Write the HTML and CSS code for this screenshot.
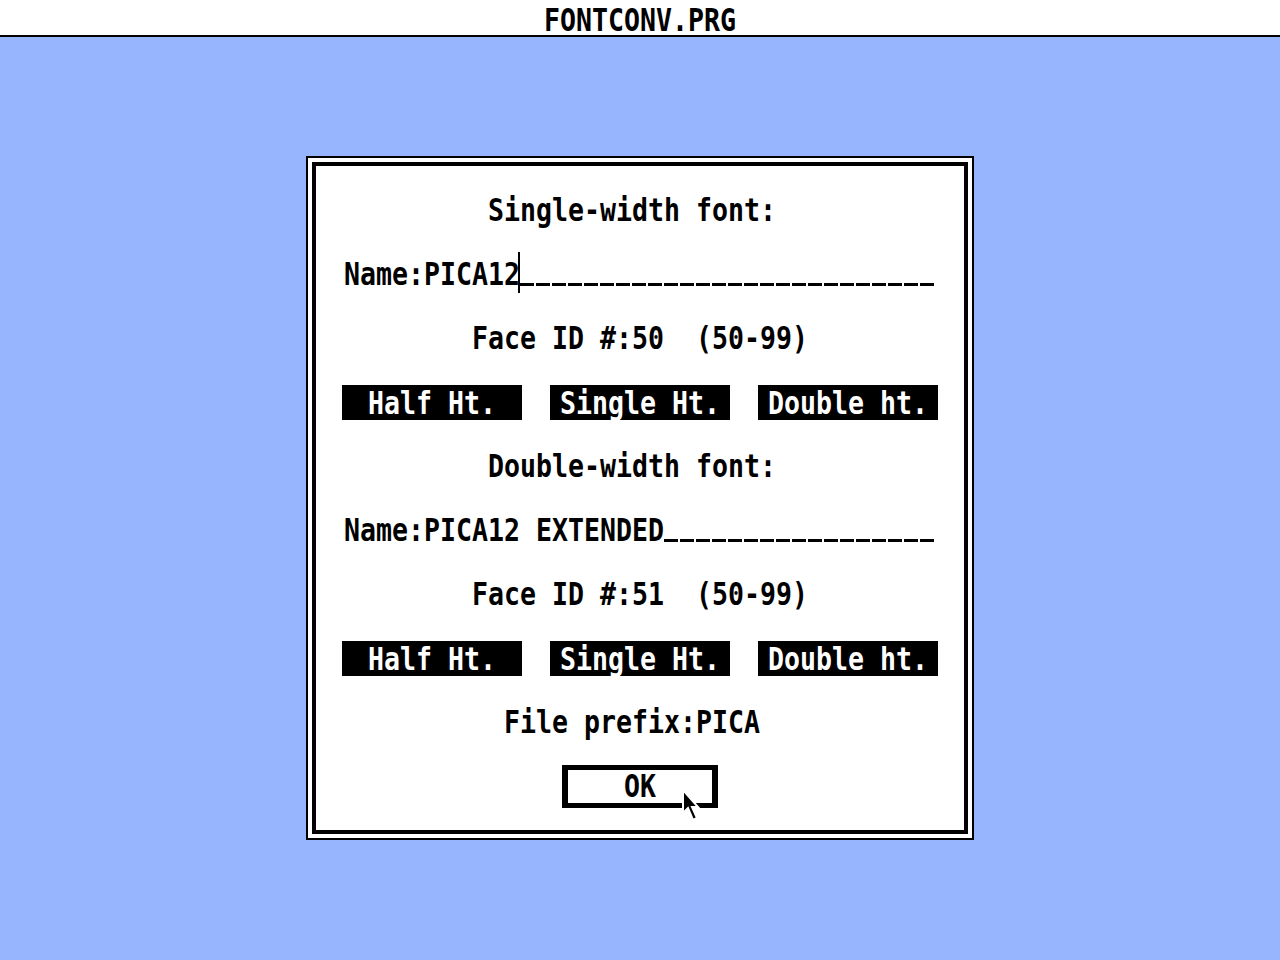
FILE: index.html
```html
<!DOCTYPE html>
<html lang="en">
<head>
    <meta charset="UTF-8">
    <title>FONTCONV.PRG</title>
    <link rel="stylesheet" href="styles.css">
</head>
<body>

    <!-- Title bar -->
    <header class="title-bar">
        <span class="txt">FONTCONV.PRG</span>
    </header>

    <!-- Desktop with the dialog box -->
    <main class="desktop">
        <div class="dialog">
            <div class="dialog-body">

                <div class="row"><span class="txt even">Single-width font:</span></div>

                <div class="row">
                    <span class="txt">Name:PICA12</span><span class="cursor"></span><span class="blank" style="width: 416px"></span>
                </div>

                <div class="row"><span class="txt">Face ID #:50  (50-99)</span></div>

                <div class="row buttons">
                    <div class="btn"><span class="txt">Half Ht.</span></div>
                    <div class="btn"><span class="txt">Single Ht.</span></div>
                    <div class="btn"><span class="txt">Double ht.</span></div>
                </div>

                <div class="row"><span class="txt even">Double-width font:</span></div>

                <div class="row">
                    <span class="txt">Name:PICA12 EXTENDED</span><span class="blank" style="width: 272px"></span>
                </div>

                <div class="row"><span class="txt">Face ID #:51  (50-99)</span></div>

                <div class="row buttons">
                    <div class="btn"><span class="txt">Half Ht.</span></div>
                    <div class="btn"><span class="txt">Single Ht.</span></div>
                    <div class="btn"><span class="txt">Double ht.</span></div>
                </div>

                <div class="row"><span class="txt even">File prefix:PICA</span></div>

                <div class="row">
                    <div class="ok-btn">
                        <span class="txt">OK</span>
                        <!-- mouse pointer -->
                        <svg class="pointer" width="18" height="34" viewBox="0 0 18 34">
                            <path d="M1 1 L1 24 L6 19 L11 31 L15 29 L10 18 L16 18 Z" fill="#000" stroke="#fff" stroke-width="2" stroke-linejoin="miter"/>
                        </svg>
                    </div>
                </div>

            </div>
        </div>
    </main>

</body>
</html>
```

FILE: styles.css
```css
/* Desktop */
body {
    margin: 0;
    background-color: #97b5fe;
    font-family: "DejaVu Sans Mono", "Liberation Mono", monospace;
    font-weight: bold;
    font-size: 26.57px;
    color: #000;
    height: 960px;
    overflow: hidden;
}

/* every text run sits on a 16px cell grid, stretched to the tall system font */
.txt {
    display: inline-block;
    line-height: 28px;
    white-space: pre;
    transform: scaleY(1.2);
}

/* strings with an even length snap half a cell to the left */
.txt.even {
    margin-right: 16px;
}

/* Title bar */
.title-bar {
    height: 37px;
    background-color: #fff;
    border-bottom: 2px solid #000;
    display: flex;
    align-items: center;
    justify-content: center;
    padding-top: 4px;
    box-sizing: border-box;
}

.desktop {
    display: flex;
    justify-content: center;
    padding-top: 119px;
}

/* Dialog box: thin outline, white gap, thick frame */
.dialog {
    background-color: #fff;
    border: 2px solid #000;
    padding: 4px;
}

.dialog-body {
    width: 648px;
    border: 4px solid #000;
    padding: 12px 0;
}

.row {
    height: 64px;
    display: flex;
    align-items: center;
    justify-content: center;
}

/* text cursor in the edit field */
.cursor {
    width: 2px;
    height: 41px;
    margin-left: -2px;
    margin-top: -3px;
    background-color: #000;
}

/* empty part of an edit field, drawn as underscores */
.blank {
    height: 28px;
    background-image: repeating-linear-gradient(to right, #000 0 14px, transparent 14px 16px);
    background-repeat: no-repeat;
    background-size: 100% 3px;
    background-position: 0 23px;
}

/* Radio buttons */
.buttons {
    gap: 28px;
}

.btn {
    width: 180px;
    height: 35px;
    margin-top: 1px;
    background-color: #000;
    color: #fff;
    display: flex;
    align-items: center;
    justify-content: center;
}

/* Default exit button */
.ok-btn {
    position: relative;
    width: 144px;
    height: 33px;
    border-style: solid;
    border-color: #000;
    border-width: 5px 6px;
    display: flex;
    align-items: center;
    justify-content: center;
}

.pointer {
    position: absolute;
    left: 114px;
    top: 19px;
}
```
